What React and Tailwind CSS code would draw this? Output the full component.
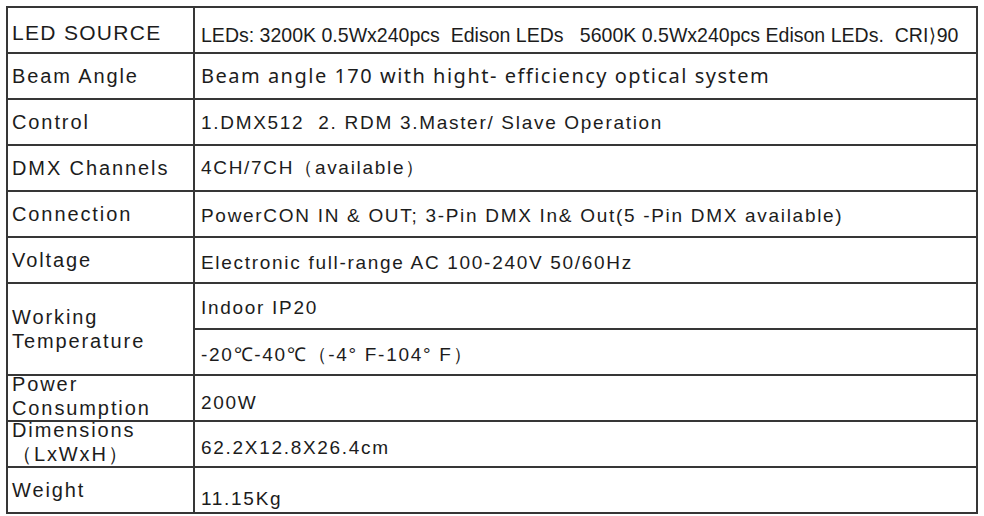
import React from "react";

const L = "font-['Liberation_Sans',Arial,sans-serif] text-[#1c1c1c]";

function Label({ children, className = "align-middle text-[20px] tracking-[1.9px] leading-[24px]", ...rest }) {
  return (
    <td {...rest} className={`border-2 border-[#363636] pl-[4px] py-0 ${L} ${className}`}>
      {children}
    </td>
  );
}

function Val({ children, className = "pt-0 pb-0" }) {
  return (
    <td className={`border-2 border-[#363636] pl-[6px] align-middle ${L} text-[19px] leading-[22px] tracking-[1.7px] ${className}`}>
      {children}
    </td>
  );
}

export default function App() {
  return (
    <div className="w-[984px] h-[516px] bg-white pt-[6px] pl-[6px] overflow-hidden">
      <table className="border-collapse w-[972px] table-fixed">
        <colgroup>
          <col className="w-[187px]" />
          <col />
        </colgroup>
        <tbody>
          <tr className="h-[46px]">
            <Label className="align-middle text-[21px] tracking-[1.3px] leading-[24px] pt-[5px]">LED SOURCE</Label>
            <td className={`border-2 border-[#363636] pl-[6px] pt-[9px] pb-0 align-middle ${L} text-[21px] whitespace-nowrap overflow-hidden`}>
              <span className="inline-block origin-left scale-x-[0.93] tracking-[0px]">
                LEDs: 3200K 0.5Wx240pcs&nbsp; Edison LEDs&nbsp;&nbsp; 5600K 0.5Wx240pcs Edison LEDs.&nbsp; CRI
                <span className="font-['DejaVu_Sans',sans-serif] font-light text-[19px] mx-[1px]">⟩</span>90
              </span>
            </td>
          </tr>
          <tr className="h-[46px]">
            <Label>Beam Angle</Label>
            <td className="border-2 border-[#363636] pl-[6px] py-0 align-middle font-['Noto_Sans',sans-serif] text-[20px] tracking-[1.5px] text-[#1c1c1c]">
              Beam angle 170 with hight- efficiency optical system
            </td>
          </tr>
          <tr className="h-[46px]">
            <Label>Control</Label>
            <Val className="pt-[1px] pb-0">1.DMX512&nbsp; 2. RDM 3.Master/ Slave Operation</Val>
          </tr>
          <tr className="h-[46px]">
            <Label>DMX Channels</Label>
            <Val>4CH/7CH（available）</Val>
          </tr>
          <tr className="h-[46px]">
            <Label>Connection</Label>
            <Val className="pt-[3px] pb-0">PowerCON IN &amp; OUT; 3-Pin DMX In&amp; Out(5 -Pin DMX available)</Val>
          </tr>
          <tr className="h-[46px]">
            <Label>Voltage</Label>
            <Val className="pt-[5px] pb-0">Electronic full-range AC 100-240V 50/60Hz</Val>
          </tr>
          <tr className="h-[46px]">
            <Label rowSpan={2}>
              Working<br />Temperature
            </Label>
            <Val className="pt-[3px] pb-0">Indoor IP20</Val>
          </tr>
          <tr className="h-[46px]">
            <Val className="pt-[6px] pb-0">-20℃-40℃（-4° F-104° F）</Val>
          </tr>
          <tr className="h-[46px]">
            <Label className="align-top text-[20px] tracking-[1.9px] leading-[24px]">
              <div className="-mt-[4px]">Power<br />Consumption</div>
            </Label>
            <Val className="pt-[9px] pb-0">200W</Val>
          </tr>
          <tr className="h-[46px]">
            <Label className="align-top text-[20px] tracking-[1.9px] leading-[24px]">
              <div className="-mt-[4px]">Dimensions<br />（LxWxH）</div>
            </Label>
            <Val className="pt-[8px] pb-0">62.2X12.8X26.4cm</Val>
          </tr>
          <tr className="h-[46px]">
            <Label>Weight</Label>
            <Val className="pt-[18px] pb-0">11.15Kg</Val>
          </tr>
        </tbody>
      </table>
    </div>
  );
}
